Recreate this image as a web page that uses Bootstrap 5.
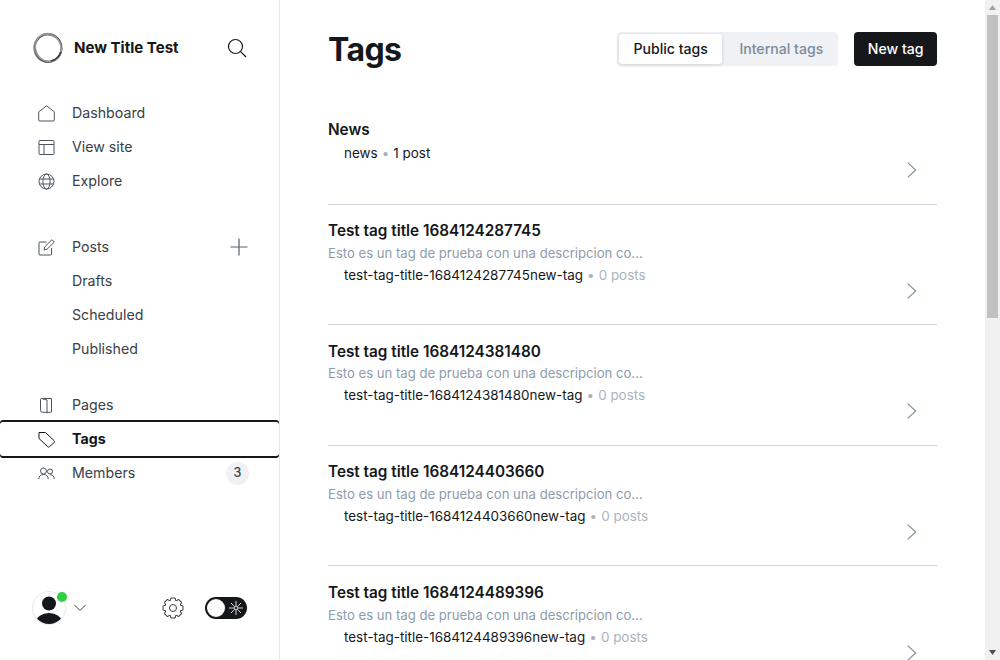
<!DOCTYPE html>
<html lang="en">
<head>
<meta charset="utf-8">
<title>Tags</title>
<link href="https://cdn.jsdelivr.net/npm/bootstrap@5.3.0/dist/css/bootstrap.min.css" rel="stylesheet">
<style>
html,body{height:100%;overflow:hidden}
body{font-family:Inter,"Liberation Sans",sans-serif;color:#15171a;background:#fff}
.app-shell{height:100vh}
.side{width:280px;flex:none;border-right:1px solid #e6e9ec;padding:32px 0 0}
.brand-row{height:32px;padding:0 32px;margin-bottom:32px}
.brand-name{font-size:15.05px;font-weight:700;margin-left:10px}
.side-list{list-style:none;margin:0 0 22px;padding:0}
.side-list-wide{margin-bottom:32px}
.side-link{height:34px;padding:0 32px 0 38px;font-size:14.2px;color:#394047;text-decoration:none;display:flex;align-items:center}
.side-link svg.ico{width:17px;height:17px;flex:none;margin-right:17px;stroke:#4b555f;fill:none;stroke-width:1}
.side-sub{padding-left:72px}
.side-active{font-weight:700;color:#15171a;border-radius:3px;box-shadow:0 -2px 0 #15171a,0 2px 0 #15171a;position:relative}
.side-active svg.ico{stroke:#15171a}
.count-pill{width:23px;height:23px;border-radius:50%;background:#eff1f4;font-size:12.5px;font-weight:500;color:#394047;margin-right:-2px}
.side-plus{margin-right:-1px}
.side-foot{padding:0 32px 35px}
.avatar-wrap{width:34px;height:34px;border-radius:50%;border:1px solid #e6e9ec;position:relative}
.avatar-wrap svg{display:block;border-radius:50%}
.live-dot{width:10px;height:10px;border-radius:50%;background:#30cf43;position:absolute;top:0;right:-2px}
.mode-pill{width:42px;height:22px;border-radius:11px;background:#15171a;padding:2px;margin-left:21px}
.mode-knob{width:18px;height:18px;border-radius:50%;background:#fff}
.main-pane{overflow:hidden;min-width:0}
.main-inner{padding:32px 48px 0}
.page-title{font-size:32px;font-weight:700;letter-spacing:-.6px;line-height:32px;padding-top:2px;margin:0}
.seg-wrap{background:#eff1f4;border-radius:4px;padding:2px;height:34px;margin-right:16px}
.seg-btn{font-size:14.1px;font-weight:500;line-height:30px;padding:0 13px 0 17.500px;color:#7c8b9a;text-decoration:none;border-radius:3px}
.seg-on{background:#fff;color:#15171a;box-shadow:0 1px 4px rgba(0,0,0,.14);padding:0 14px}
.add-btn{background:#15171a;color:#fff;border-radius:4px;height:34px;padding:0 13.500px;font-size:14.1px;font-weight:500;line-height:34px;border:0}
.tag-rows{margin-top:38px}
.tag-row{height:120.67px;border-bottom:1px solid #ced4d9;padding-top:16.6px}
.tag-row-first{height:100.5px;padding-top:16.2px}
.tag-name{font-size:15.3px;font-weight:600;line-height:20px;margin:0}
.tag-desc{font-size:13.12px;line-height:22px;color:#8e9cac;margin-top:.5px}
.tag-meta{font-size:13.45px;line-height:22px;padding-left:16px;color:#15171a}
.tag-row-first .tag-meta{margin-top:1.500px}
.tag-sep{color:#abb4be;margin:0 .3px}
.tag-zero{color:#abb4be}
.tag-go{width:10px;height:16px;stroke:#7c8b9a;fill:none;stroke-width:1.1;align-self:flex-end;flex:none;margin:0 20px 25.500px 0}
.scroll-rail{width:15px;flex:none;background:#f1f1f1}
.rail-cap{height:15px}
.rail-thumb{height:303px;width:11px;background:#c1c1c1;margin:0 auto}
</style>
</head>
<body>
<div class="app-shell d-flex">
  <aside class="side d-flex flex-column">
    <div class="brand-row d-flex align-items-center">
      <svg width="32" height="32" viewBox="0 0 32 32" fill="none"><ellipse cx="16" cy="16" rx="13.400" ry="13.900" stroke="#55575b" stroke-width="2.200"/><ellipse cx="15.800" cy="16" rx="14" ry="13" transform="rotate(35 16 16)" stroke="#8a8c90" stroke-width="1.200"/><ellipse cx="16.400" cy="15.600" rx="12.400" ry="14.400" transform="rotate(-20 16 16)" stroke="#a0a2a5" stroke-width="1"/><path d="M19 29a13.500 13.500 0 0 0 10-9" stroke="#3c3e42" stroke-width="1.400"/></svg>
      <span class="brand-name">New Title Test</span>
      <svg class="ms-auto" width="20" height="20" viewBox="0 0 20 20" fill="none" stroke="#15171a" stroke-width="1.200"><circle cx="8.500" cy="8.500" r="7"/><path d="M13.600 13.600 19 19"/></svg>
    </div>
    <ul class="side-list side-list-wide">
      <li><a class="side-link" href="#"><svg class="ico" viewBox="0 0 17 17"><path d="M.7 6.800 8.500.8l7.800 6v8.200a1 1 0 0 1-1 1H1.700a1 1 0 0 1-1-1z"/></svg>Dashboard</a></li>
      <li><a class="side-link" href="#"><svg class="ico" viewBox="0 0 17 17"><rect x="1" y="1.500" width="15" height="14" rx="1"/><path d="M1 5.500h15M6 5.500v10"/></svg>View site</a></li>
      <li><a class="side-link" href="#"><svg class="ico" viewBox="0 0 17 17"><circle cx="8.500" cy="8.500" r="7.500"/><ellipse cx="8.500" cy="8.500" rx="3.600" ry="7.500"/><path d="M1.400 6h14.200M1.400 11h14.200"/></svg>Explore</a></li>
    </ul>
    <ul class="side-list">
      <li><a class="side-link" href="#"><svg class="ico" viewBox="0 0 17 17"><path d="M8.500 3H2a1 1 0 0 0-1 1v11a1 1 0 0 0 1 1h10.500a1 1 0 0 0 1-1V9"/><path d="m6 11 .8-3.200L14 .7l2.300 2.300-7.200 7.200z"/></svg>Posts<svg class="ms-auto side-plus" width="18" height="18" viewBox="0 0 18 18" fill="none" stroke="#54606c" stroke-width="1.200"><path d="M9 .5v17M.5 9h17"/></svg></a></li>
      <li><a class="side-link side-sub" href="#">Drafts</a></li>
      <li><a class="side-link side-sub" href="#">Scheduled</a></li>
      <li><a class="side-link side-sub" href="#">Published</a></li>
    </ul>
    <ul class="side-list">
      <li><a class="side-link" href="#"><svg class="ico" viewBox="0 0 17 17"><path d="M3.500 1.500h10v13.200a.6.6 0 0 1-.6.6H4.500a2 2 0 0 1-2-2V2.500a1 1 0 0 1 1-1z"/><path d="M3.500 1.500 9 3v13.300"/></svg>Pages</a></li>
      <li><a class="side-link side-active" href="#"><svg class="ico" viewBox="0 0 17 17"><path d="M1 1.500h6.500l8.800 8.400a1 1 0 0 1 0 1.400l-5 4.500a1 1 0 0 1-1.400 0L1 7.500z"/></svg>Tags</a></li>
      <li><a class="side-link" href="#"><svg class="ico" viewBox="0 0 17 17"><circle cx="5.500" cy="6" r="3"/><path d="M.8 14c0-3 2-4.500 4.700-4.500s4.700 1.500 4.700 4.500"/><circle cx="12" cy="6.500" r="2.500"/><path d="M12 9.700c2.500 0 4.200 1.300 4.200 4.300"/></svg>Members<span class="count-pill ms-auto d-flex align-items-center justify-content-center">3</span></a></li>
    </ul>
    <div class="side-foot mt-auto d-flex align-items-center">
      <div class="avatar-wrap">
        <svg width="32" height="32" viewBox="0 0 32 32"><circle cx="16" cy="11.500" r="7" fill="#15171a"/><ellipse cx="16" cy="30" rx="13" ry="9" fill="#15171a"/></svg>
        <span class="live-dot"></span>
      </div>
      <svg class="ms-2" width="12" height="8" viewBox="0 0 12 8" fill="none" stroke="#394047" stroke-width="1"><path d="m.5 1 5.500 5.500L11.500 1"/></svg>
      <svg class="ms-auto" width="22" height="22" viewBox="0 0 22 22" fill="none" stroke="#394047" stroke-width="1" stroke-linejoin="round"><defs><path id="gear-tooth" d="M8.070 3.930 8.900 1h4.200l.83 2.930"/></defs><circle cx="11" cy="11" r="3.500"/><use href="#gear-tooth"/><use href="#gear-tooth" transform="rotate(45 11 11)"/><use href="#gear-tooth" transform="rotate(90 11 11)"/><use href="#gear-tooth" transform="rotate(135 11 11)"/><use href="#gear-tooth" transform="rotate(180 11 11)"/><use href="#gear-tooth" transform="rotate(225 11 11)"/><use href="#gear-tooth" transform="rotate(270 11 11)"/><use href="#gear-tooth" transform="rotate(315 11 11)"/></svg>
      <div class="mode-pill d-flex align-items-center">
        <span class="mode-knob"></span>
        <svg class="ms-1" width="14" height="14" viewBox="0 0 14 14" fill="none" stroke="#d8dbde" stroke-width="1"><circle cx="7" cy="7" r="1.800"/><path d="M7 0v5M7 9v5M0 7h5M9 7h5M2 2l3.500 3.500M8.500 8.500 12 12M2 12l3.500-3.500M8.500 5.500 12 2"/></svg>
      </div>
    </div>
  </aside>
  <main class="main-pane flex-grow-1">
    <div class="main-inner">
      <header class="d-flex align-items-center">
        <h1 class="page-title me-auto">Tags</h1>
        <div class="seg-wrap d-flex">
          <a class="seg-btn seg-on" href="#">Public tags</a>
          <a class="seg-btn" href="#">Internal tags</a>
        </div>
        <button class="add-btn" type="button">New tag</button>
      </header>
      <div class="tag-rows">
        <div class="tag-row tag-row-first d-flex">
          <div class="flex-grow-1"><h3 class="tag-name">News</h3><div class="tag-meta">news <span class="tag-sep">•</span> 1 post</div></div>
          <svg class="tag-go" viewBox="0 0 10 16"><path d="m.7.7 8 7.300-8 7.300"/></svg>
        </div>
        <div class="tag-row d-flex">
          <div class="flex-grow-1"><h3 class="tag-name">Test tag title 1684124287745</h3><div class="tag-desc">Esto es un tag de prueba con una descripcion co...</div><div class="tag-meta">test-tag-title-1684124287745new-tag <span class="tag-sep">•</span> <span class="tag-zero">0 posts</span></div></div>
          <svg class="tag-go" viewBox="0 0 10 16"><path d="m.7.7 8 7.300-8 7.300"/></svg>
        </div>
        <div class="tag-row d-flex">
          <div class="flex-grow-1"><h3 class="tag-name">Test tag title 1684124381480</h3><div class="tag-desc">Esto es un tag de prueba con una descripcion co...</div><div class="tag-meta">test-tag-title-1684124381480new-tag <span class="tag-sep">•</span> <span class="tag-zero">0 posts</span></div></div>
          <svg class="tag-go" viewBox="0 0 10 16"><path d="m.7.7 8 7.300-8 7.300"/></svg>
        </div>
        <div class="tag-row d-flex">
          <div class="flex-grow-1"><h3 class="tag-name">Test tag title 1684124403660</h3><div class="tag-desc">Esto es un tag de prueba con una descripcion co...</div><div class="tag-meta">test-tag-title-1684124403660new-tag <span class="tag-sep">•</span> <span class="tag-zero">0 posts</span></div></div>
          <svg class="tag-go" viewBox="0 0 10 16"><path d="m.7.7 8 7.300-8 7.300"/></svg>
        </div>
        <div class="tag-row d-flex">
          <div class="flex-grow-1"><h3 class="tag-name">Test tag title 1684124489396</h3><div class="tag-desc">Esto es un tag de prueba con una descripcion co...</div><div class="tag-meta">test-tag-title-1684124489396new-tag <span class="tag-sep">•</span> <span class="tag-zero">0 posts</span></div></div>
          <svg class="tag-go" viewBox="0 0 10 16"><path d="m.7.7 8 7.300-8 7.300"/></svg>
        </div>
      </div>
    </div>
  </main>
  <div class="scroll-rail d-flex flex-column" aria-hidden="true">
    <div class="rail-cap d-flex align-items-center justify-content-center"><svg width="7" height="5" viewBox="0 0 7 5"><path d="M3.500 0 7 5H0z" fill="#a3a3a3"/></svg></div>
    <div class="rail-thumb"></div>
    <div class="rail-cap mt-auto d-flex align-items-center justify-content-center"><svg width="7" height="5" viewBox="0 0 7 5"><path d="M0 0h7L3.500 5z" fill="#505050"/></svg></div>
  </div>
</div>
<script src="https://cdn.jsdelivr.net/npm/bootstrap@5.3.0/dist/js/bootstrap.bundle.min.js"></script>
</body>
</html>
